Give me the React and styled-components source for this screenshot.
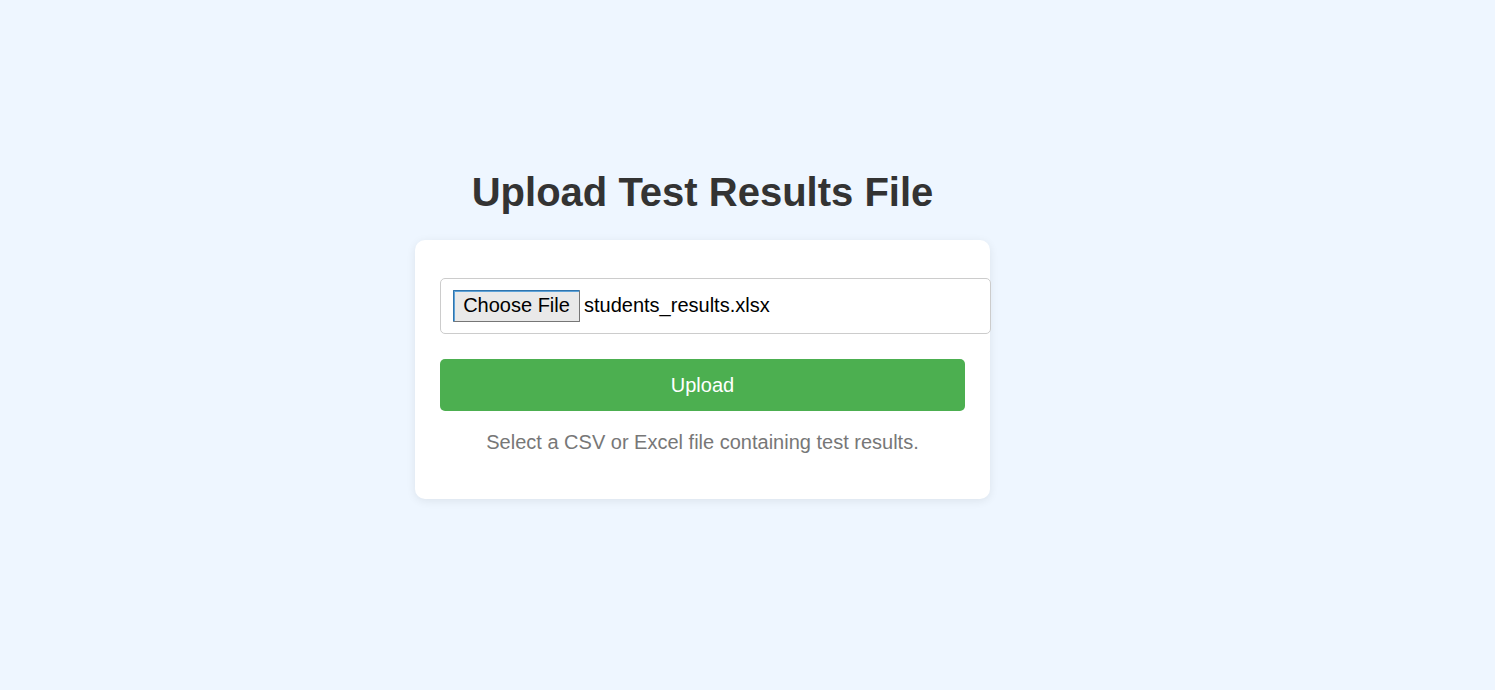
import React from "react";
import styled, { createGlobalStyle } from "styled-components";

const Global = createGlobalStyle`
  html, body { margin: 0; padding: 0; }
  body {
    background: #eef6ff;
    font-family: "Liberation Sans", Arial, sans-serif;
    color: #333;
  }
`;

const Page = styled.div`
  min-height: 690px;
  box-sizing: border-box;
  display: flex;
  flex-direction: column;
  align-items: center;
  padding: 168px 90px 0 0;
`;

const Title = styled.h1`
  margin: 0 0 24px;
  font-size: 40px;
  line-height: 48px;
  font-weight: bold;
  color: #333;
`;

const Card = styled.div`
  width: 575px;
  box-sizing: border-box;
  background: #fff;
  border-radius: 10px;
  box-shadow: 0 2px 10px rgba(0, 0, 0, 0.08);
  padding: 38px 25px 25px;
  display: flex;
  flex-direction: column;
`;

const FileField = styled.label`
  display: flex;
  align-items: center;
  gap: 4px;
  width: 551px;
  height: 56px;
  box-sizing: border-box;
  padding: 0 12px 1px;
  border: 1px solid #ccc;
  border-radius: 5px;
  font-size: 20px;
  color: #000;
  background: #fff;
`;

const FakeButton = styled.span`
  display: inline-flex;
  align-items: center;
  justify-content: center;
  height: 32px;
  width: 127px;
  box-sizing: border-box;
  padding-bottom: 1px;
  background: #e9e9e9;
  border: 1px solid;
  border-color: #2f74ad #767676 #767676 #2f74ad;
  box-shadow: inset 1px 1px 0 #5da2d8;
  border-radius: 1px;
  font-size: 20px;
  color: #000;
`;

const UploadButton = styled.button`
  margin-top: 25px;
  height: 52px;
  width: 100%;
  border: none;
  border-radius: 5px;
  background: #4caf50;
  color: #fff;
  font-family: inherit;
  font-size: 20px;
  cursor: pointer;
`;

const Hint = styled.p`
  margin: 19px 0 0;
  text-align: center;
  font-size: 20px;
  line-height: 24px;
  color: #777;
  padding-bottom: 20px;
`;

export default function App() {
  return (
    <>
      <Global />
      <Page>
        <Title>Upload Test Results File</Title>
        <Card>
          <FileField>
            <FakeButton>Choose File</FakeButton>
            <span>students_results.xlsx</span>
          </FileField>
          <UploadButton>Upload</UploadButton>
          <Hint>Select a CSV or Excel file containing test results.</Hint>
        </Card>
      </Page>
    </>
  );
}
